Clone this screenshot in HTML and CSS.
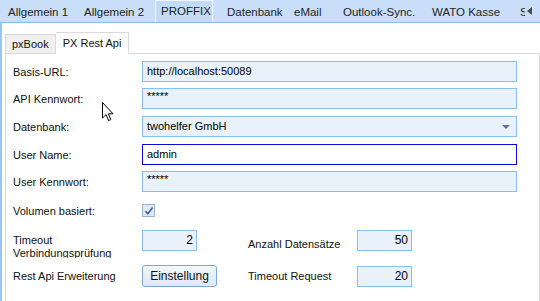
FILE: index.html
```html
<!DOCTYPE html>
<html lang="de">
  <head>
    <meta charset="UTF-8" />
    <title>PROFFIX - PX Rest Api</title>
    <link rel="stylesheet" href="styles.css">
  </head>
  <body>
    <div class="tabbar">
      <span class="tab t1">Allgemein 1</span>
      <span class="tab t2">Allgemein 2</span>
      <span class="tab active">PROFFIX</span>
      <span class="tab t4">Datenbank</span>
      <span class="tab t5">eMail</span>
      <span class="tab t6">Outlook-Sync.</span>
      <span class="tab t7">WATO Kasse</span>
      <span class="tab cut">S</span>
      <span class="scroll"></span>
    </div>
    <div class="page">
      <div class="subtabs">
        <span class="subtab">pxBook</span>
        <span class="subtab active">PX Rest Api</span>
      </div>
      <div class="panel">
        <div class="row r1">
          <label>Basis-URL:</label>
          <div class="field">http://localhost:50089</div>
        </div>
        <div class="row r2">
          <label>API Kennwort:</label>
          <div class="field pw">*****</div>
        </div>
        <div class="row r3">
          <label>Datenbank:</label>
          <div class="field combo">twohelfer GmbH<span class="arrow"></span></div>
        </div>
        <div class="row r4">
          <label>User Name:</label>
          <div class="field focus">admin</div>
        </div>
        <div class="row r5">
          <label>User Kennwort:</label>
          <div class="field pw">*****</div>
        </div>
        <div class="row r6">
          <label>Volumen basiert:</label>
          <span class="check">
            <svg width="10" height="10" viewBox="0 0 10 10"><path d="M1.5 5.2 L3.8 7.8 L8.6 1.4" fill="none" stroke="#3b5fa8" stroke-width="1.6"/></svg>
          </span>
        </div>
        <div class="grid r7">
          <label class="two">Timeout<br>Verbindungsprüfung</label>
          <div class="field num">2</div>
          <label>Anzahl Datensätze</label>
          <div class="field num">50</div>
        </div>
        <div class="grid r8">
          <label>Rest Api Erweiterung</label>
          <button>Einstellung</button>
          <label>Timeout Request</label>
          <div class="field num">20</div>
        </div>
      </div>
    </div>
    <svg class="cursor" width="13" height="20" viewBox="0 0 13 20">
      <path d="M0.5 0.5 L0.5 16 L4 12.6 L6.6 18.6 L8.8 17.6 L6.3 11.8 L11 11.8 Z" fill="#fff" stroke="#000" stroke-width="1"/>
    </svg>
  </body>
</html>
```

FILE: styles.css
```css
* {
  margin: 0;
  padding: 0;
  box-sizing: border-box;
}
body {
  width: 540px;
  height: 301px;
  overflow: hidden;
  background: #fff;
  font-family: "Liberation Sans", Arial, sans-serif;
  font-size: 11px;
  color: #111;
  position: relative;
}

.tabbar {
  height: 23px;
  background: #c9def8;
  border-bottom: 1px solid #8fbbee;
  display: flex;
  align-items: flex-end;
  padding-left: 2px;
  white-space: nowrap;
  overflow: hidden;
}
.tab {
  flex: none;
  height: 21px;
  line-height: 20px;
  padding-left: 5px;
  font-size: 11.5px;
  color: #1e1e1e;
  border: 1px solid transparent;
  border-bottom: none;
  overflow: hidden;
}
.t1 { width: 76px; }
.t2 { width: 77px; }
.t4 { width: 67px; }
.t5 { width: 49px; }
.t6 { width: 89px; }
.t7 { width: 88px; }
.tab.active {
  width: 58px;
  margin-right: 8px;
  height: 22px;
  background: #c2dbf7;
  border-color: #eef5fd;
}
.tab.cut {
  width: 12px;
  padding-left: 5px;
}
.scroll {
  flex: none;
  width: 0;
  height: 0;
  border-top: 4px solid transparent;
  border-bottom: 4px solid transparent;
  border-right: 5px solid #4a4a4a;
  margin: 0 0 7px 1px;
}

.page {
  height: 278px;
  border-left: 2px solid #9cc4f0;
  padding: 9px 0 0 3px;
}
.subtabs {
  display: flex;
  align-items: flex-end;
  height: 21px;
  white-space: nowrap;
}
.subtab {
  height: 19px;
  line-height: 18px;
  padding: 0 6px;
  font-size: 11px;
  background: #f0f0f0;
  border: 1px solid #d9d9d9;
  border-bottom: none;
}
.subtab.active {
  height: 22px;
  line-height: 20px;
  padding: 0 7px;
  background: #fff;
  margin-bottom: -1px;
  border-left: none;
  position: relative;
}
.panel {
  height: 250px;
  border: 1px solid #d9d9d9;
  border-bottom: none;
  padding: 7px 0 0 7px;
}

.row {
  display: flex;
  align-items: center;
  height: 21px;
}
.row label {
  width: 129px;
  flex: none;
}
.grid {
  display: grid;
  grid-template-columns: 129px 106px 109px 55px;
  align-items: center;
  height: 21px;
}
.r2, .r5 { margin-top: 6px; }
.r3, .r4 { margin-top: 7px; }
.r6 { margin-top: 12px; height: 13px; }
.r7 { margin-top: 13px; align-items: start; }
.r7 > :nth-child(3) { align-self: center; }
.r8 { margin-top: 14px; }

.field {
  width: 375px;
  height: 21px;
  line-height: 19px;
  padding: 0 4px;
  background: #e9f1fb;
  border: 1px solid #86bff4;
  white-space: nowrap;
  overflow: hidden;
  color: #000;
}
.field.pw {
  line-height: 15px;
  font-size: 11px;
}
.field.focus {
  background: #fff;
  border-color: #0b0bd0;
}
.field.combo {
  display: flex;
  justify-content: space-between;
  align-items: center;
}
.arrow {
  width: 0;
  height: 0;
  border-left: 4px solid transparent;
  border-right: 4px solid transparent;
  border-top: 4px solid #5575a8;
  margin-right: 2px;
}
.check {
  width: 13px;
  height: 13px;
  border: 1px solid #9eb3cf;
  background: #dfe8f3;
  display: flex;
  align-items: center;
  justify-content: center;
}
.field.num {
  width: 55px;
  text-align: right;
  padding-right: 3px;
  font-size: 12px;
}
label.two {
  line-height: 13px;
  height: 28px;
  overflow: hidden;
  padding-top: 4px;
}
button {
  width: 75px;
  height: 22px;
  font-family: inherit;
  font-size: 12px;
  color: #111;
  border: 1px solid #7ea6d6;
  border-radius: 3px;
  background: linear-gradient(#f2f7fd, #dbe8f7);
}

.cursor {
  position: absolute;
  left: 102px;
  top: 102px;
}
```
